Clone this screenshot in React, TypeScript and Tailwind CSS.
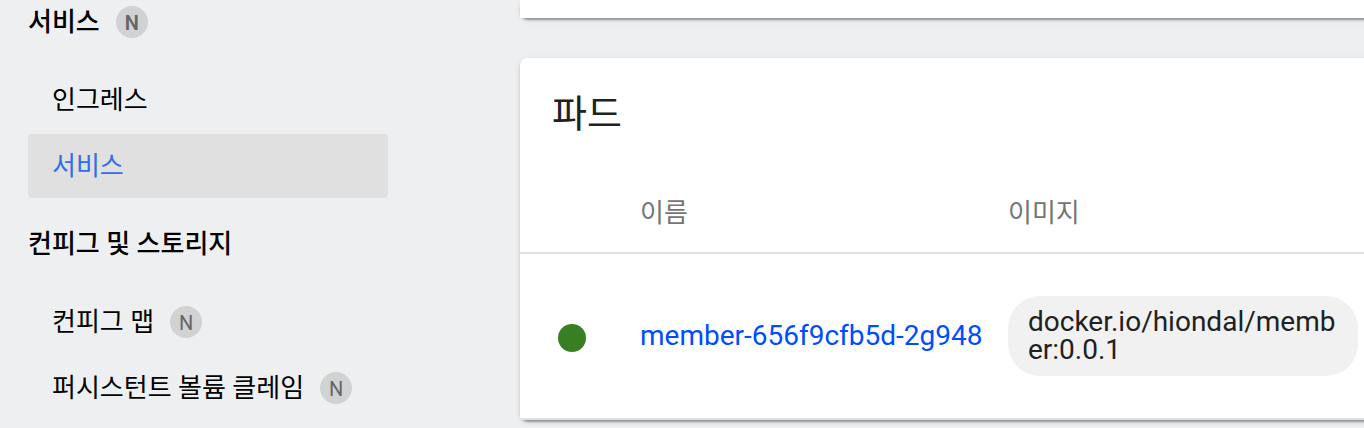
import clsx from 'clsx';

interface NavItem {
  label: string;
  namespaced?: boolean;
  active?: boolean;
}

interface NavSection extends NavItem {
  items: NavItem[];
}

interface Pod {
  name: string;
  image: string;
}

const sections: NavSection[] = [
  {
    label: '서비스',
    namespaced: true,
    items: [{ label: '인그레스' }, { label: '서비스', active: true }],
  },
  {
    label: '컨피그 및 스토리지',
    items: [
      { label: '컨피그 맵', namespaced: true },
      { label: '퍼시스턴트 볼륨 클레임', namespaced: true },
    ],
  },
];

const pods: Pod[] = [{ name: 'member-656f9cfb5d-2g948', image: 'docker.io/hiondal/member:0.0.1' }];

const cardClass =
  'rounded-lg shadow-[0_4px_2px_-2px_rgba(0,0,0,0.2),0_2px_2px_0_rgba(0,0,0,0.14),0_2px_6px_0_rgba(0,0,0,0.12)]';

function NamespaceBadge({ bold }: { bold?: boolean }) {
  return (
    <span
      className={clsx(
        'flex size-8 items-center justify-center rounded-full bg-[#d1d2d3] pt-0.5 text-xl text-[#666]',
        bold ? 'font-semibold' : 'font-normal',
      )}
    >
      N
    </span>
  );
}

function Sidebar() {
  return (
    <nav className="flex w-[416px] shrink-0 flex-col gap-6 px-7 text-[26px] text-black">
      {sections.map((section) => (
        <section key={section.label} className="flex flex-col gap-6">
          <a href="#" className="flex h-11 items-center gap-4 font-medium">
            {section.label}
            {section.namespaced && <NamespaceBadge bold />}
          </a>
          <ul className="flex flex-col gap-0.5">
            {section.items.map((item) => (
              <li key={item.label}>
                <a
                  href="#"
                  className={clsx(
                    'flex h-16 items-center gap-4 rounded px-6',
                    item.active && 'bg-[#e0e0e0] text-[#326de6]',
                  )}
                >
                  {item.label}
                  {item.namespaced && <NamespaceBadge />}
                </a>
              </li>
            ))}
          </ul>
        </section>
      ))}
    </nav>
  );
}

function PodTable() {
  return (
    <table className="w-full table-fixed border-collapse bg-white text-left">
      <colgroup>
        <col className="w-[120px]" />
        <col className="w-[368px]" />
        <col />
      </colgroup>
      <thead>
        <tr className="h-[83px] border-b-2 border-[#e0e0e0] text-[26px] text-[#757575]">
          <th aria-label="Status" />
          <th className="pt-1 font-normal">이름</th>
          <th className="pt-1 font-normal">이미지</th>
        </tr>
      </thead>
      <tbody>
        {pods.map((pod) => (
          <tr key={pod.name} className="h-[166px] border-b-2 border-[#e0e0e0] text-[28px]">
            <td className="pt-1 pl-[38px]">
              <span className="block size-7 rounded-full bg-[#387f23]" />
            </td>
            <td>
              <a href="#" className="text-[#004cff]">
                {pod.name}
              </a>
            </td>
            <td className="pr-[22px]">
              <div className="rounded-[32px] bg-[#f1f1f1] px-5 py-3 leading-7 break-all text-[#212121]">
                {pod.image}
              </div>
            </td>
          </tr>
        ))}
      </tbody>
    </table>
  );
}

export default function App() {
  return (
    <div className="flex min-h-screen overflow-hidden bg-[#eeeff1] font-[Roboto,'Noto_Sans_CJK_KR',sans-serif]">
      <Sidebar />
      {/* cards run past the right edge of the window */}
      <main className="-mr-4 ml-[104px] flex min-w-0 flex-1 flex-col gap-10">
        <div className={cardClass}>
          <div className="h-[18px] bg-white" />
        </div>
        <section className={cardClass}>
          <h2 className="rounded-t-lg bg-white px-8 py-7 text-[38px] leading-14 text-[#212121]">파드</h2>
          <PodTable />
        </section>
      </main>
    </div>
  );
}
